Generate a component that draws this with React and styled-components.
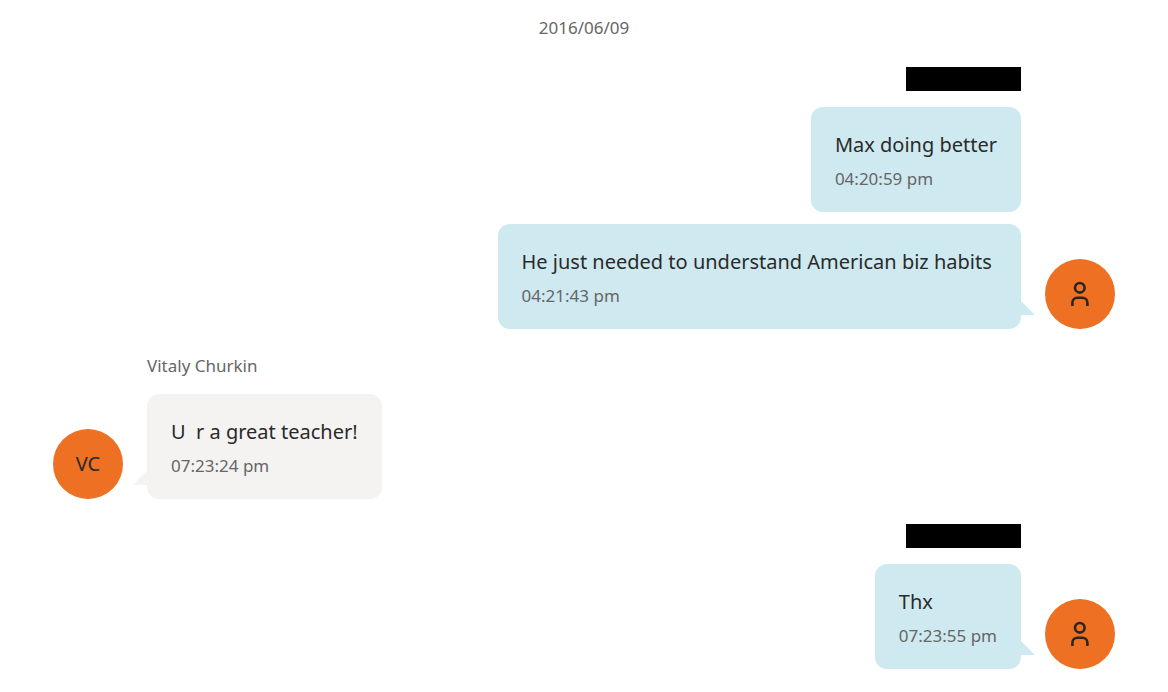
import React from "react";
import styled, { createGlobalStyle } from "styled-components";

const GlobalStyle = createGlobalStyle`
  * { box-sizing: border-box; }
  body { margin: 0; background: #fff; color: #2a2a2a; font-family: "Noto Sans", "Open Sans", sans-serif; }
  h2, p { margin: 0; font-weight: 400; }
`;

const Conversation = styled.main`
  display: flex;
  flex-direction: column;
  gap: 25px;
  padding: 16px 53px 24px;
`;

const DateHeading = styled.h2`
  && { margin-bottom: 2px; font-size: 17px; line-height: 24px; color: #666; text-align: center; }
`;

const Group = styled.section`
  display: flex;
  flex-direction: ${({ $own }) => ($own ? "row-reverse" : "row")};
  align-items: flex-end;
  gap: 24px;
`;

const Avatar = styled.div`
  flex: none;
  display: flex;
  align-items: center;
  justify-content: center;
  width: 70px;
  height: 70px;
  border-radius: 50%;
  background: #ee7023;
  font-size: 20px;
  line-height: 28px;
`;

const Messages = styled.div`
  display: flex;
  flex-direction: column;
  align-items: ${({ $own }) => ($own ? "flex-end" : "flex-start")};
  gap: 12px;
`;

const Sender = styled.p`
  && { margin-bottom: 4px; }
  font-size: 17px;
  line-height: 24px;
  color: #666;
`;

const Redacted = styled.div`
  width: 115px;
  height: 24px;
  margin-bottom: 4px;
  background: #000;
`;

const Bubble = styled.article`
  position: relative;
  padding: 23px 24px 21px;
  border-radius: 12px;
  background: ${({ $own }) => ($own ? "#cfe9f0" : "#f4f3f2")};
`;

const Tail = styled.span`
  position: absolute;
  bottom: 14px;
  ${({ $own }) => ($own ? "left" : "right")}: 100%;
  width: 14px;
  height: 14px;
  background: inherit;
  clip-path: ${({ $own }) =>
    $own ? "polygon(0 0, 100% 100%, 0 100%)" : "polygon(100% 0, 100% 100%, 0 100%)"};
`;

const Text = styled.p`
  font-size: 20px;
  line-height: 30px;
  white-space: pre-wrap;
`;

const Time = styled.time`
  display: block;
  margin-top: 7px;
  font-size: 17px;
  line-height: 24px;
  color: #666;
`;

const PersonIcon = () => (
  <svg width="24" height="28" viewBox="0 0 24 28" fill="none" stroke="#2a2521" strokeWidth="2.6" aria-hidden="true">
    <circle cx="11.8" cy="7.8" r="4.8" />
    <path d="M4.4 26v-3.2a5 5 0 0 1 5-5h5a5 5 0 0 1 5 5V26" />
  </svg>
);

const groups = [
  { own: true, messages: [["Max doing better", "04:20:59 pm"], ["He just needed to understand American biz habits\u00a0", "04:21:43 pm"]] },
  { own: false, sender: "Vitaly Churkin", initials: "VC", messages: [["U  r a great teacher!", "07:23:24 pm"]] },
  { own: true, messages: [["Thx", "07:23:55 pm"]] },
];

export default function App() {
  return (
    <>
      <GlobalStyle />
      <Conversation>
        <DateHeading>2016/06/09</DateHeading>
        {groups.map((group, index) => (
          <Group key={index} $own={group.own}>
            <Avatar>{group.own ? <PersonIcon /> : group.initials}</Avatar>
            <Messages $own={group.own}>
              {group.sender ? <Sender>{group.sender}</Sender> : <Redacted />}
              {group.messages.map(([text, time], i) => (
                <Bubble key={time} $own={group.own}>
                  <Text>{text}</Text>
                  <Time>{time}</Time>
                  {i === group.messages.length - 1 && <Tail $own={group.own} />}
                </Bubble>
              ))}
            </Messages>
          </Group>
        ))}
      </Conversation>
    </>
  );
}
